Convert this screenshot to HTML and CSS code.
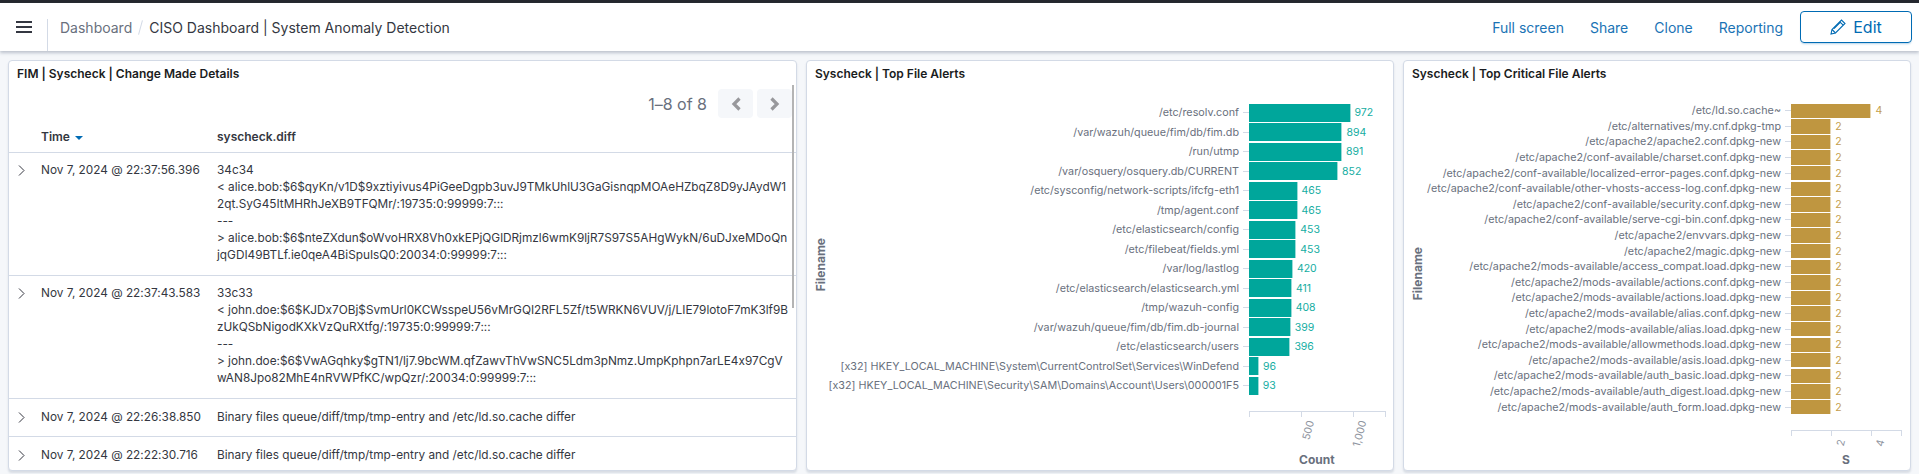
FILE: index.html
```html
<!DOCTYPE html>
<html>
<head>
    <meta charset="UTF-8">
    <title>CISO Dashboard | System Anomaly Detection</title>
    <link rel="stylesheet" href="styles.css">
</head>
<body>
    <div class="topline"></div>
    <header class="header">
        <button class="menu-btn">
            <svg width="16" height="12" viewBox="0 0 16 12"><path d="M0 1h16M0 6h16M0 11h16" stroke="#343741" stroke-width="2"/></svg>
        </button>
        <nav class="crumbs">
            <span class="crumb-parent">Dashboard</span>
            <span class="crumb-sep"></span>
            <span class="crumb-current">CISO Dashboard | System Anomaly Detection</span>
        </nav>
        <div class="actions">
            <a class="action">Full screen</a>
            <a class="action">Share</a>
            <a class="action">Clone</a>
            <a class="action">Reporting</a>
            <button class="edit-btn">
                <svg width="16" height="16" viewBox="0 0 16 16" fill="none" stroke="#006bb4" stroke-width="1.1"><path d="M1 15l1-4.5L11.500 1 15 4.500 5.500 14z"/><path d="M2 10.500L5.500 14M9.800 2.800l3.400 3.400M4 9.500l6.500-6.500"/></svg>
                Edit
            </button>
        </div>
    </header>

    <main class="grid">
        <section class="panel panel-table">
            <h3 class="panel-title">FIM | Syscheck | Change Made Details</h3>
            <div class="pager">
                <span class="pager-count">1–8 of 8</span>
                <button class="pager-btn"><svg width="12" height="14" viewBox="0 0 12 14"><path d="M9.500 1.500L4 7l5.500 5.500" fill="none" stroke="#98989c" stroke-width="3.200"/></svg></button>
                <button class="pager-btn"><svg width="12" height="14" viewBox="0 0 12 14"><path d="M2.500 1.500L8 7l-5.500 5.500" fill="none" stroke="#98989c" stroke-width="3.200"/></svg></button>
            </div>
            <div class="scrollbar"></div>
            <div class="doc-row doc-head">
                <span class="doc-toggle"></span>
                <span class="doc-time">Time <i class="sort-arrow"></i></span>
                <span>syscheck.diff</span>
            </div>
            <div class="doc-row doc-tall">
                <span class="doc-toggle"><svg width="7" height="11" viewBox="0 0 7 11"><path d="M1 .5l5 5-5 5" fill="none" stroke="#343741"/></svg></span>
                <span class="doc-time">Nov 7, 2024 @ 22:37:56.396</span>
                <span class="doc-diff">34c34<br>&lt; alice.bob:$6$qyKn/v1D$9xztiyivus4PiGeeDgpb3uvJ9TMkUhlU3GaGisnqpMOAeHZbqZ8D9yJAydW1<br>2qt.SyG45ItMHRhJeXB9TFQMr/:19735:0:99999:7:::<br>---<br>&gt; alice.bob:$6$nteZXdun$oWvoHRX8Vh0xkEPjQGlDRjmzl6wmK9ljR7S97S5AHgWykN/6uDJxeMDoQn<br>jqGDI49BTLf.ie0qeA4BiSpuIsQ0:20034:0:99999:7:::</span>
            </div>
            <div class="doc-row doc-tall">
                <span class="doc-toggle"><svg width="7" height="11" viewBox="0 0 7 11"><path d="M1 .5l5 5-5 5" fill="none" stroke="#343741"/></svg></span>
                <span class="doc-time">Nov 7, 2024 @ 22:37:43.583</span>
                <span class="doc-diff">33c33<br>&lt; john.doe:$6$KJDx7OBj$SvmUrl0KCWsspeU56vMrGQI2RFL5Zf/t5WRKN6VUV/j/LIE79lotoF7mK3lf9B<br>zUkQSbNigodKXkVzQuRXtfg/:19735:0:99999:7:::<br>---<br>&gt; john.doe:$6$VwAGqhky$gTN1/lj7.9bcWM.qfZawvThVwSNC5Ldm3pNmz.UmpKphpn7arLE4x97CgV<br>wAN8Jpo82MhE4nRVWPfKC/wpQzr/:20034:0:99999:7:::</span>
            </div>
            <div class="doc-row">
                <span class="doc-toggle"><svg width="7" height="11" viewBox="0 0 7 11"><path d="M1 .5l5 5-5 5" fill="none" stroke="#343741"/></svg></span>
                <span class="doc-time">Nov 7, 2024 @ 22:26:38.850</span>
                <span class="doc-diff">Binary files queue/diff/tmp/tmp-entry and /etc/ld.so.cache differ</span>
            </div>
            <div class="doc-row">
                <span class="doc-toggle"><svg width="7" height="11" viewBox="0 0 7 11"><path d="M1 .5l5 5-5 5" fill="none" stroke="#343741"/></svg></span>
                <span class="doc-time">Nov 7, 2024 @ 22:22:30.716</span>
                <span class="doc-diff">Binary files queue/diff/tmp/tmp-entry and /etc/ld.so.cache differ</span>
            </div>
        </section>

        <section class="panel panel-chart">
            <h3 class="panel-title">Syscheck | Top File Alerts</h3>
            <div class="chart chart-teal">
                <div class="y-title">Filename</div>
                <div class="plot" id="top-files"></div>
                <div class="x-axis">
                    <i class="tick" style="left:0"></i>
                    <i class="tick" style="left:52px"><b>500</b></i>
                    <i class="tick" style="left:104px"><b>1,000</b></i>
                    <i class="tick" style="left:136px"></i>
                </div>
                <div class="x-title">Count</div>
            </div>
        </section>

        <section class="panel panel-chart">
            <h3 class="panel-title">Syscheck | Top Critical File Alerts</h3>
            <div class="chart chart-gold">
                <div class="y-title">Filename</div>
                <div class="plot" id="critical-files"></div>
                <div class="x-axis">
                    <i class="tick" style="left:0"></i>
                    <i class="tick" style="left:40px"><b>2</b></i>
                    <i class="tick" style="left:80px"><b>4</b></i>
                    <i class="tick" style="left:110px"></i>
                </div>
                <div class="x-title">S</div>
            </div>
        </section>
    </main>

    <script>
        let topFiles = [
            ["/etc/resolv.conf", 972],
            ["/var/wazuh/queue/fim/db/fim.db", 894],
            ["/run/utmp", 891],
            ["/var/osquery/osquery.db/CURRENT", 852],
            ["/etc/sysconfig/network-scripts/ifcfg-eth1", 465],
            ["/tmp/agent.conf", 465],
            ["/etc/elasticsearch/config", 453],
            ["/etc/filebeat/fields.yml", 453],
            ["/var/log/lastlog", 420],
            ["/etc/elasticsearch/elasticsearch.yml", 411],
            ["/tmp/wazuh-config", 408],
            ["/var/wazuh/queue/fim/db/fim.db-journal", 399],
            ["/etc/elasticsearch/users", 396],
            ["[x32] HKEY_LOCAL_MACHINE\\System\\CurrentControlSet\\Services\\WinDefend", 96],
            ["[x32] HKEY_LOCAL_MACHINE\\Security\\SAM\\Domains\\Account\\Users\\000001F5", 93]
        ];

        let m = "/etc/apache2/mods-available/";
        let c = "/etc/apache2/conf-available/";
        let criticalFiles = [
            ["/etc/ld.so.cache~", 4],
            ["/etc/alternatives/my.cnf.dpkg-tmp", 2],
            ["/etc/apache2/apache2.conf.dpkg-new", 2],
            [c + "charset.conf.dpkg-new", 2],
            [c + "localized-error-pages.conf.dpkg-new", 2],
            [c + "other-vhosts-access-log.conf.dpkg-new", 2],
            [c + "security.conf.dpkg-new", 2],
            [c + "serve-cgi-bin.conf.dpkg-new", 2],
            ["/etc/apache2/envvars.dpkg-new", 2],
            ["/etc/apache2/magic.dpkg-new", 2],
            [m + "access_compat.load.dpkg-new", 2],
            [m + "actions.conf.dpkg-new", 2],
            [m + "actions.load.dpkg-new", 2],
            [m + "alias.conf.dpkg-new", 2],
            [m + "alias.load.dpkg-new", 2],
            [m + "allowmethods.load.dpkg-new", 2],
            [m + "asis.load.dpkg-new", 2],
            [m + "auth_basic.load.dpkg-new", 2],
            [m + "auth_digest.load.dpkg-new", 2],
            [m + "auth_form.load.dpkg-new", 2]
        ];

        function drawBars(id, rows, pxPerUnit) {
            let plot = document.getElementById(id);
            for (let i = 0; i < rows.length; i++) {
                let row = document.createElement("div");
                row.className = "bar-row";
                row.innerHTML = '<span class="bar-label"></span><i class="bar-tick"></i>' +
                    '<span class="bar" style="width:' + rows[i][1] * pxPerUnit + 'px"></span>' +
                    '<span class="bar-value">' + rows[i][1] + '</span>';
                row.querySelector(".bar-label").textContent = rows[i][0];
                plot.append(row);
            }
        }

        drawBars("top-files", topFiles, 0.1045);
        drawBars("critical-files", criticalFiles, 20.1);
    </script>
</body>
</html>
```

FILE: styles.css
```css
* {
    box-sizing: border-box;
}

html, body {
    height: 100%;
}

body {
    margin: 0;
    overflow: hidden;
    background: #f5f7fa;
    color: #343741;
    font-family: Inter, "Liberation Sans", sans-serif;
    font-size: 12px;
    font-feature-settings: "calt" 0;
}

button {
    font-family: inherit;
    border: none;
    background: none;
    padding: 0;
}

.topline {
    height: 3px;
    background: #25282f;
}

.header {
    display: flex;
    align-items: center;
    height: 48px;
    background: #fff;
    box-shadow: 0 2px 3px rgba(120, 130, 150, 0.45);
}

.menu-btn {
    display: flex;
    justify-content: center;
    align-items: flex-start;
    align-self: flex-end;
    width: 48px;
    height: 32px;
    padding-top: 2px;
    border-right: 1px solid #d3dae6;
}

.crumbs {
    display: flex;
    align-items: center;
    padding-left: 12px;
    font-size: 14px;
}

.crumb-parent {
    color: #69707d;
}

.crumb-sep {
    width: 1px;
    height: 15px;
    margin: 0 8px;
    background: #d3dae6;
    transform: rotate(15deg);
}

.actions {
    display: flex;
    align-items: center;
    margin-left: auto;
    padding-right: 7px;
}

.action {
    margin-right: 26px;
    color: #1a73b5;
    font-size: 14px;
}

.action:last-of-type {
    margin-right: 17px;
}

.edit-btn {
    display: flex;
    align-items: center;
    justify-content: center;
    gap: 7px;
    width: 112px;
    height: 32px;
    border: 1px solid #006bb4;
    border-radius: 4px;
    color: #006bb4;
    font-size: 16px;
    box-shadow: 0 2px 2px -1px rgba(0, 107, 180, 0.3);
}

.grid {
    display: grid;
    grid-template-columns: 789px 588px 508px;
    column-gap: 9px;
    padding: 9px 0 0 8px;
    height: 420px;
}

.panel {
    position: relative;
    height: 411px;
    overflow: hidden;
    background: #fff;
    border: 1px solid #d3dae6;
    border-radius: 4px;
    box-shadow: 0 2px 2px rgba(152, 162, 179, 0.3);
}

.panel-title {
    margin: 0;
    padding: 6px 8px 0 8px;
    height: 27px;
    color: #1a1c21;
    font-size: 12px;
    font-weight: 600;
    line-height: 14px;
}

.pager {
    display: flex;
    justify-content: flex-end;
    align-items: center;
    gap: 4px;
    height: 29px;
    margin-top: 1px;
    padding-right: 4px;
}

.pager-count {
    margin-right: 7px;
    color: #69707d;
    font-size: 16px;
}

.pager-btn {
    display: flex;
    justify-content: center;
    align-items: center;
    width: 35px;
    height: 29px;
    border-radius: 4px;
    background: #f5f7fa;
}

.scrollbar {
    position: absolute;
    top: 24px;
    right: 2px;
    width: 2px;
    height: 223px;
    background: #b4b4b4;
}

.doc-row {
    display: flex;
    min-height: 38px;
    padding: 10px 0 0;
    border-bottom: 1px solid #d3dae6;
    font-size: 11.8px;
    line-height: 17px;
}

.doc-head {
    height: 35px;
    min-height: 35px;
    font-size: 12px;
    font-weight: 600;
}

.doc-tall {
    height: 123px;
    padding-top: 9px;
}

.doc-toggle {
    display: flex;
    flex: none;
    width: 32px;
    height: 17px;
    padding-left: 9px;
    align-items: center;
}

.doc-time {
    width: 176px;
    flex: none;
}

.doc-diff {
    white-space: nowrap;
}

.sort-arrow {
    display: inline-block;
    margin-left: 2px;
    border: 4px solid transparent;
    border-top: 4px solid #006bb4;
    vertical-align: -3px;
}

.chart {
    position: relative;
    height: 383px;
}

.y-title, .x-title {
    color: #69707d;
    font-size: 12px;
    font-weight: 700;
}

.y-title {
    position: absolute;
    left: 6px;
    top: 135px;
    writing-mode: vertical-rl;
    transform: rotate(180deg);
}

.chart-gold .y-title {
    top: 144px;
}

.plot {
    margin-top: 15px;
}

.bar-row {
    display: flex;
    align-items: center;
    font-size: 10.75px;
}

.bar-label {
    flex: none;
    text-align: right;
    white-space: nowrap;
    color: #69707d;
}

.bar-tick {
    flex: none;
    width: 6px;
    height: 1px;
    margin-left: 4px;
    background: #d3dae6;
}

.bar {
    flex: none;
    border-right: 1px solid rgba(255, 255, 255, 0.6);
}

.bar-value {
    margin-left: 4px;
    font-size: 10.5px;
}

.chart-teal .bar-label {
    width: 432px;
}

.chart-teal .bar-row {
    height: 19.52px;
}

.chart-teal .bar {
    height: 18px;
    background: #00a69b;
}

.chart-teal .bar-value {
    color: #14ada2;
}

.chart-gold .bar-label {
    width: 377px;
}

.chart-gold .bar-row {
    height: 15.6px;
}

.chart-gold .bar {
    height: 14.4px;
    background: #bf9640;
}

.chart-gold .bar-value {
    color: #c49d4b;
}

.x-axis {
    position: absolute;
    height: 1px;
    background: #d3dae6;
}

.chart-teal .x-axis {
    left: 442px;
    top: 308px;
    width: 137px;
}

.chart-gold .x-axis {
    left: 387px;
    top: 327px;
    width: 111px;
}

.tick {
    position: absolute;
    top: 0;
    width: 1px;
    height: 6px;
    background: #d3dae6;
}

.tick b {
    position: absolute;
    top: 8px;
    right: -3px;
    color: #8f95a0;
    font-size: 10.5px;
    font-weight: 400;
    font-style: normal;
    white-space: nowrap;
    transform-origin: 100% 0;
    transform: rotate(-75deg);
}

.x-title {
    position: absolute;
    top: 349px;
}

.chart-teal .x-title {
    left: 492px;
}

.chart-gold .x-title {
    left: 438px;
}
```
